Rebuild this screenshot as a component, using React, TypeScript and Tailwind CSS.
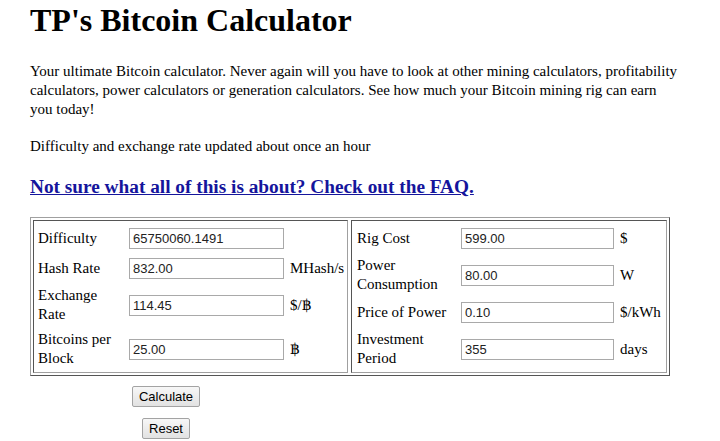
import React from "react";

type Field = {
  label: string[];
  value: string;
  unit: string;
};

const leftFields: Field[] = [
  { label: ["Difficulty"], value: "65750060.1491", unit: "" },
  { label: ["Hash Rate"], value: "832.00", unit: "MHash/s" },
  { label: ["Exchange", "Rate"], value: "114.45", unit: "$/฿" },
  { label: ["Bitcoins per", "Block"], value: "25.00", unit: "฿" },
];

const rightFields: Field[] = [
  { label: ["Rig Cost"], value: "599.00", unit: "$" },
  { label: ["Power", "Consumption"], value: "80.00", unit: "W" },
  { label: ["Price of Power"], value: "0.10", unit: "$/kWh" },
  { label: ["Investment", "Period"], value: "355", unit: "days" },
];

const FieldRow = ({ field, right }: { field: Field; right?: boolean }) => {
  const tall = field.label.length > 1;
  return (
    <div
      className={
        (right ? "grid-cols-[104px_159px_1fr] " : "grid-cols-[91px_161px_1fr] ") +
        (tall ? "h-[44px] " : "h-[30px] ") +
        "grid items-center"
      }
    >
      <div className="leading-[19px]">
        {field.label.map((l) => (
          <div key={l}>{l}</div>
        ))}
      </div>
      <input
        readOnly
        value={field.value}
        className={
          (right ? "w-[153px] " : "w-[155px] ") +
          "h-[21px] border border-[#a9a9a9] bg-white px-[3px] font-['Liberation_Sans',Arial,sans-serif] text-[13px] text-[#222] outline-none"
        }
      />
      <div className="leading-[19px]">{field.unit}</div>
    </div>
  );
};

const App: React.FC = () => {
  return (
    <div className="min-h-screen bg-white pl-[30px] pt-[2px] font-['Liberation_Serif','DejaVu_Serif',serif] text-[15px] text-black">
      <h1 className="text-[32px] font-bold leading-[37px]">TP's Bitcoin Calculator</h1>

      <p className="mt-[23px] w-[685px] leading-[19px]">
        Your ultimate Bitcoin calculator. Never again will you have to look at other mining
        calculators, profitability
        <br />
        calculators, power calculators or generation calculators. See how much your Bitcoin mining
        rig can earn
        <br />
        you today!
      </p>

      <p className="mt-[18px] leading-[19px]">Difficulty and exchange rate updated about once an hour</p>

      <a href="#" className="mt-[20px] block w-fit text-[19.3px] font-bold leading-[22px] text-[#15159c] underline">
        Not sure what all of this is about? Check out the FAQ.
      </a>

      {/* calculator table */}
      <div className="mt-[19px] flex w-[640px] gap-[3px] border border-[#a0a0a0] border-r-[#555] border-b-[#555] p-[2px]">
        <div className="w-[315px] border border-[#555] border-r-[#a0a0a0] border-b-[#a0a0a0] pl-[4px] pt-[2px] pb-[1px]">
          {leftFields.map((f) => (
            <FieldRow key={f.value} field={f} />
          ))}
        </div>
        <div className="flex-1 border border-[#555] border-r-[#a0a0a0] border-b-[#a0a0a0] pl-[5px] pt-[2px] pb-[1px]">
          {rightFields.map((f) => (
            <FieldRow key={f.value} field={f} right />
          ))}
        </div>
      </div>

      <div className="mt-[10px] flex w-[272px] flex-col items-center gap-[11px] font-['Liberation_Sans',Arial,sans-serif] text-[13px]">
        <button className="h-[21px] rounded-[2px] border border-[#a3a3a3] bg-gradient-to-b from-[#f7f7f7] to-[#e2e2e2] px-[6px] text-black">
          Calculate
        </button>
        <button className="h-[21px] rounded-[2px] border border-[#a3a3a3] bg-gradient-to-b from-[#f7f7f7] to-[#e2e2e2] px-[6px] text-black">
          Reset
        </button>
      </div>
    </div>
  );
};

export default App;
